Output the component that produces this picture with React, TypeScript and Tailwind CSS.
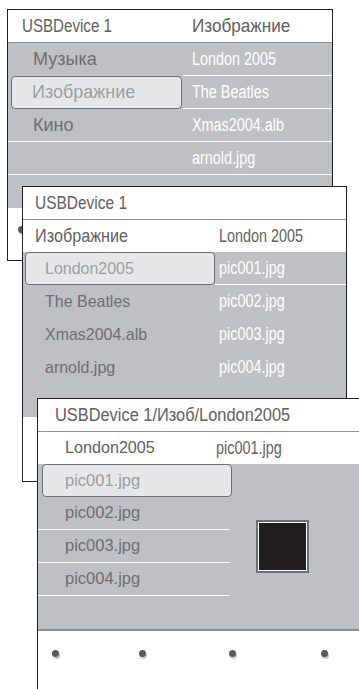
import React from "react";

const ff = { fontFamily: '"Liberation Sans", Arial, sans-serif' };

function N({ children, cls = "scale-x-[0.8]" }: { children: React.ReactNode; cls?: string }) {
  return <span className={`inline-block origin-left whitespace-nowrap ${cls}`}>{children}</span>;
}

function Dot({ cls }: { cls: string }) {
  return <div className={`w-[7px] h-[7px] rounded-full bg-[#58595b] shadow-[1px_2px_0_#c9cacc] ${cls}`} />;
}

export default function App() {
  return (
    <div className="relative w-[359px] h-[689px] bg-white overflow-hidden" style={ff}>
      {/* Window 1 */}
      <div className="absolute left-[7px] top-[9px] w-[326px] h-[252px] border border-[#231f20] bg-white flex flex-col">
        <div className="h-[33px] shrink-0 flex border-b border-[#8f9093] text-[18px] text-[#5f6062]">
          <div className="w-[175px] pl-[14px] flex items-center"><N cls="scale-x-[0.84]">USBDevice 1</N></div>
          <div className="flex-1 pl-[9px] flex items-center"><N cls="scale-x-[0.95]">Изображние</N></div>
        </div>
        <div className="flex bg-[#bfc0c3]">
          <div className="w-[175px] flex flex-col text-[18px] text-[#6d6e71]">
            <div className="h-[33px] pl-[25px] flex items-center">Музыка</div>
            <div className="h-[33px] ml-[3px] mr-[1px] pl-[20px] flex items-center bg-[#e6e7e9] border-[1.5px] border-[#6d6e71] rounded-[4px] text-[#9c9da0]">Изображние</div>
            <div className="h-[33px] pl-[25px] flex items-center border-b border-white">Кино</div>
            <div className="h-[33px] border-b border-white" />
            <div className="h-[33px]" />
          </div>
          <div className="flex-1 flex flex-col text-[18px] text-white">
            <div className="h-[33px] pl-[9px] flex items-center border-b border-white"><N>London 2005</N></div>
            <div className="h-[33px] pl-[9px] flex items-center border-b border-white"><N>The Beatles</N></div>
            <div className="h-[33px] pl-[9px] flex items-center border-b border-white"><N>Xmas2004.alb</N></div>
            <div className="h-[33px] pl-[9px] flex items-center border-b border-white"><N>arnold.jpg</N></div>
            <div className="h-[33px]" />
          </div>
        </div>
        <div className="flex-1 pt-[18px] pl-[10px]">
          <Dot cls="" />
        </div>
      </div>

      {/* Window 2 */}
      <div className="absolute left-[22px] top-[186px] w-[325px] h-[296px] border border-[#231f20] bg-white flex flex-col">
        <div className="h-[33px] shrink-0 pl-[12px] flex items-center border-b border-[#8f9093] text-[18px] text-[#5f6062]"><N cls="scale-x-[0.86]">USBDevice 1</N></div>
        <div className="h-[32px] shrink-0 flex text-[18px] text-[#5f6062]">
          <div className="w-[192px] pl-[12px] flex items-center"><N cls="scale-x-[0.9]">Изображние</N></div>
          <div className="flex-1 pl-[4px] flex items-center"><N>London 2005</N></div>
        </div>
        <div className="flex bg-[#bfc0c3]">
          <div className="w-[192px] flex flex-col text-[17px] text-[#6d6e71]">
            <div className="h-[33px] ml-[2px] pl-[19px] flex items-center bg-[#e6e7e9] border-[1.5px] border-[#6d6e71] rounded-[4px] text-[#9c9da0]"><N cls="scale-x-[0.94]">London2005</N></div>
            <div className="h-[33px] pl-[22px] flex items-center"><N cls="scale-x-[0.94]">The Beatles</N></div>
            <div className="h-[33px] pl-[22px] flex items-center"><N cls="scale-x-[0.94]">Xmas2004.alb</N></div>
            <div className="h-[33px] pl-[22px] flex items-center"><N cls="scale-x-[0.94]">arnold.jpg</N></div>
            <div className="h-[33px]" />
          </div>
          <div className="flex-1 flex flex-col text-[18px] text-white">
            <div className="h-[33px] pl-[4px] flex items-center border-b border-white"><N>pic001.jpg</N></div>
            <div className="h-[33px] pl-[4px] flex items-center"><N>pic002.jpg</N></div>
            <div className="h-[33px] pl-[4px] flex items-center"><N>pic003.jpg</N></div>
            <div className="h-[33px] pl-[4px] flex items-center"><N>pic004.jpg</N></div>
            <div className="h-[33px]" />
          </div>
        </div>
      </div>

      {/* Window 3 */}
      <div className="absolute left-[37px] top-[398px] w-[400px] h-[320px] border border-[#231f20] bg-white flex flex-col">
        <div className="h-[33px] shrink-0 pl-[17px] flex items-center border-b border-[#8f9093] text-[18px] text-[#5f6062]"><N cls="scale-x-[0.91]">USBDevice 1/Изоб/London2005</N></div>
        <div className="h-[32px] shrink-0 flex">
          <div className="w-[194px] pl-[27px] flex items-center text-[17px] text-[#5f6062]"><N cls="scale-x-[0.95]">London2005</N></div>
          <div className="flex-1 flex items-center text-[18px] text-[#5f6062] -ml-[16px]"><N>pic001.jpg</N></div>
        </div>
        <div className="flex bg-[#bfc0c3] border-b-2 border-[#8f9093]">
          <div className="w-[194px] flex flex-col text-[17px] text-[#6d6e71]">
            <div className="h-[33px] ml-[4px] pl-[22px] flex items-center bg-[#e6e7e9] border-[1.5px] border-[#6d6e71] rounded-[4px] text-[#9c9da0]"><N cls="scale-x-[0.97]">pic001.jpg</N></div>
            <div className="h-[33px] mr-[2px] pl-[27px] flex items-center border-b border-white"><N cls="scale-x-[0.97]">pic002.jpg</N></div>
            <div className="h-[33px] mr-[2px] pl-[27px] flex items-center border-b border-white"><N cls="scale-x-[0.97]">pic003.jpg</N></div>
            <div className="h-[33px] mr-[2px] pl-[27px] flex items-center border-b border-white"><N cls="scale-x-[0.97]">pic004.jpg</N></div>
            <div className="h-[33px]" />
          </div>
          <div className="flex-1 flex items-center pl-[24px]">
            <div className="w-[53px] h-[53px] border-2 border-[#6d6e71] bg-white p-[1px]">
              <div className="w-full h-full bg-[#231f20]" />
            </div>
          </div>
        </div>
        <div className="flex pt-[19px]">
          <Dot cls="ml-[14px]" />
          <Dot cls="ml-[80px]" />
          <Dot cls="ml-[83px]" />
          <Dot cls="ml-[85px]" />
        </div>
      </div>
    </div>
  );
}
